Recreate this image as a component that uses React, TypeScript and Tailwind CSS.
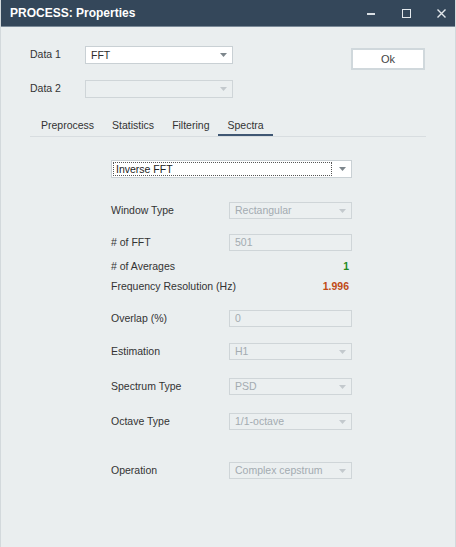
import React from "react";

const FONT = "font-['Liberation_Sans',Arial,sans-serif]";

function Caret({ dim }: { dim?: boolean }) {
  return (
    <svg width="7" height="4" viewBox="0 0 7 4" className="shrink-0">
      <path d="M0 0 H7 L3.5 4 Z" fill={dim ? "#c3c9cd" : "#7d868c"} />
    </svg>
  );
}

function Combo({ value, disabled, className = "" }: { value: string; disabled?: boolean; className?: string }) {
  return (
    <div
      className={`flex items-center justify-between border pl-[5px] pr-[5px] ${
        disabled ? "bg-[#ebeff0] border-[#cfd5d8] text-[#a3abb0]" : "bg-white border-[#c9d0d4] text-[#2d2d2d]"
      } ${className}`}
    >
      <span className="leading-none">{value}</span>
      <Caret dim={disabled} />
    </div>
  );
}

function Field({ value }: { value: string }) {
  return (
    <div className="flex items-center h-[17px] w-[123px] border border-[#cfd5d8] bg-[#ebeff0] pl-[5px] text-[#a3abb0]">
      <span className="leading-none">{value}</span>
    </div>
  );
}

function Row({ label, className = "", children }: { label: string; className?: string; children: React.ReactNode }) {
  return (
    <div className={`flex items-center ${className}`}>
      <div className="w-[118px] whitespace-nowrap text-[#333]">{label}</div>
      {children}
    </div>
  );
}

export default function App() {
  const tabs = ["Preprocess", "Statistics", "Filtering", "Spectra"];

  return (
    <div className={`${FONT} w-[456px] h-[547px] bg-[#eaeeef] border-x border-[#d3d9dc] text-[10.5px] flex flex-col overflow-hidden`}>
      {/* title bar */}
      <div className="h-[27px] bg-[#34475a] border-b border-[#7b8a98] flex items-center pl-[9px] pr-[5px] text-white shrink-0">
        <span className="font-bold text-[12px]">PROCESS: Properties</span>
        <div className="ml-auto flex items-center gap-[17px]">
          <div className="w-[18px] flex justify-center">
            <div className="w-[8px] h-[1.5px] bg-[#d9dfe4] mt-[2px]" />
          </div>
          <div className="w-[18px] flex justify-center">
            <div className="w-[9px] h-[9px] border-[1.5px] border-[#e3e8ec]" />
          </div>
          <div className="w-[18px] flex justify-center">
            <svg width="9" height="9" viewBox="0 0 9 9">
              <path d="M0.5 0.5 L8.5 8.5 M8.5 0.5 L0.5 8.5" stroke="#e3e8ec" strokeWidth="1.4" />
            </svg>
          </div>
        </div>
      </div>

      <div className="pl-[29px] pr-[30px]">
        {/* data selectors and Ok */}
        <div className="flex items-start">
          <div>
            <div className="flex items-center mt-[19px]">
              <div className="w-[55px] text-[#333]">Data 1</div>
              <Combo value="FFT" className="w-[148px] h-[18px]" />
            </div>
            <div className="flex items-center mt-[16px]">
              <div className="w-[55px] text-[#333]">Data 2</div>
              <Combo value="" disabled className="w-[148px] h-[18px]" />
            </div>
          </div>
          <button className="ml-auto mt-[21px] w-[74px] h-[22px] bg-white border-2 border-[#d0d8dc] text-[#444] text-[11px]">
            Ok
          </button>
        </div>

        {/* tabs */}
        <div className="flex mt-[17px] w-[396px] pl-[2px] border-b border-[#d8dde0]">
          {tabs.map(t => (
            <div
              key={t}
              className={`px-[9px] h-[21px] flex items-center text-[#333] ${
                t === "Spectra" ? "border-b-2 border-[#3f5773] -mb-px pt-[2px]" : ""
              }`}
            >
              {t}
            </div>
          ))}
        </div>

        {/* spectra page */}
        <div className="pl-[81px]">
          <div className="mt-[23px] w-[241px] h-[18px] bg-white border border-[#c9d0d4] flex items-center pl-[1px] pr-[5px]">
            <div className="flex-1 h-[14px] border border-dotted border-[#555] flex items-center pl-[2px] text-[#222] leading-none">
              Inverse FFT
            </div>
            <div className="w-[14px] flex justify-end">
              <Caret />
            </div>
          </div>

          <Row label="Window Type" className="mt-[24px]">
            <Combo value="Rectangular" disabled className="w-[123px] h-[17px]" />
          </Row>
          <Row label="# of FFT" className="mt-[15px]">
            <Field value="501" />
          </Row>
          <Row label="# of Averages" className="mt-[9px] h-[14px]">
            <div className="w-[120px] text-right font-bold text-[#1f8a1f]">1</div>
          </Row>
          <Row label="Frequency Resolution (Hz)" className="mt-[6px] h-[14px]">
            <div className="w-[120px] text-right font-bold text-[#c04a16]">1.996</div>
          </Row>
          <Row label="Overlap (%)" className="mt-[16px]">
            <Field value="0" />
          </Row>
          <Row label="Estimation" className="mt-[16px]">
            <Combo value="H1" disabled className="w-[123px] h-[17px]" />
          </Row>
          <Row label="Spectrum Type" className="mt-[18px]">
            <Combo value="PSD" disabled className="w-[123px] h-[17px]" />
          </Row>
          <Row label="Octave Type" className="mt-[18px]">
            <Combo value="1/1-octave" disabled className="w-[123px] h-[17px]" />
          </Row>
          <Row label="Operation" className="mt-[32px]">
            <Combo value="Complex cepstrum" disabled className="w-[123px] h-[17px]" />
          </Row>
        </div>
      </div>
    </div>
  );
}
